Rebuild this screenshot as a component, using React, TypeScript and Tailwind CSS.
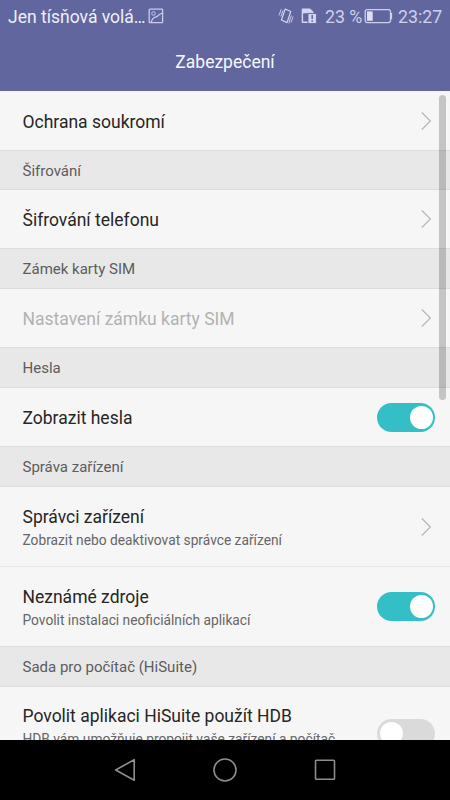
import type { ReactNode } from 'react';

function Chevron() {
  return (
    <svg width="12" height="20" viewBox="0 0 12 20" fill="none" stroke="#b4b4b4" strokeWidth="1.1" className="mr-[18px] shrink-0">
      <path d="M1.8 1.5 10.4 10 1.8 18.5" />
    </svg>
  );
}

function Toggle({ on }: { on: boolean }) {
  return (
    <div className={`mr-[15px] flex h-[29px] w-[58px] shrink-0 items-center rounded-full px-[2.5px] ${on ? 'justify-end bg-[#34bfc6]' : 'justify-start bg-[#dadada]'}`}>
      <div className="h-[23px] w-[23px] rounded-full bg-white" />
    </div>
  );
}

function Section({ children, height }: { children: ReactNode; height: string }) {
  return (
    <div className={`flex shrink-0 items-center border-y border-[#dddddd] bg-[#e8e8e8] pt-[2px] pl-[22.5px] text-[15px] text-[#5c5c5c] ${height}`}>
      {children}
    </div>
  );
}

function Row({ title, summary, end, height, disabled }: { title: string; summary?: string; end: ReactNode; height: string; disabled?: boolean }) {
  return (
    <div className={`flex shrink-0 items-center justify-between pl-[22.5px] ${height}`}>
      <div className="pt-[2px] whitespace-nowrap">
        <div className={`text-[17.5px] leading-[24px] ${disabled ? 'text-[#b2b2b2]' : 'text-[#262626]'}`}>{title}</div>
        {summary && <div className="text-[13.75px] leading-[22px] text-[#666666]">{summary}</div>}
      </div>
      {end}
    </div>
  );
}

function StatusBar() {
  return (
    <div className="flex h-[32px] items-center pl-[8px] text-[17.75px] text-[#eeeffa]">
      <span className="w-[137px] pt-[2px] text-[17.5px] whitespace-nowrap">Jen tísňová volá…</span>
      <svg width="16" height="16" viewBox="0 0 16 16" fill="none" stroke="#c9caec" strokeWidth="1.3" className="ml-[3px]">
        <rect x="1.2" y="1.2" width="13.4" height="13.4" rx="0.6" />
        <circle cx="5.5" cy="5.5" r="1.8" strokeWidth="1" />
        <path d="M3.2 14.2C4 11.5 5.6 9.5 7.5 9.2S10.8 6 14.3 5.2" />
      </svg>
      <svg width="16" height="18" viewBox="0 0 16 18" fill="none" stroke="#d4d5f0" strokeWidth="1.2" className="ml-[114px]">
        <path d="M7.2 2 12.8 4.5 9 15.6 3.4 13Z" strokeLinejoin="round" />
        <path d="M1 8.4 3.2 2.3M2.9 9.4 5 3.5M11.2 14 13.4 8.6M10.8 16.4 11.8 13.5M13 15.6 15.1 9.5" strokeWidth="0.9" />
      </svg>
      <svg width="16" height="18" viewBox="0 0 16 18" className="ml-[7px]">
        <path d="M1.4 2.2H8.8L11.9 5.3V15.2H1.4Z" fill="none" stroke="#d4d5f0" strokeWidth="1.4" strokeLinejoin="round" />
        <path d="M1.2 2H9L12 5V6.2H1.2Z" fill="#d4d5f0" />
        <rect x="7" y="6.4" width="8.4" height="10.2" fill="#d4d5f0" stroke="#62669f" strokeWidth="0.9" />
        <path d="M11.2 8V12M11.2 13.2V14.8" stroke="#62669f" strokeWidth="1.5" />
      </svg>
      <span className="ml-[8px] w-[38px] pt-[2px] whitespace-nowrap text-[#cfd0ea]">23 %</span>
      <svg width="29" height="16" viewBox="0 0 29 16" className="ml-[1px]">
        <rect x="1.2" y="1.6" width="25.3" height="13" rx="2" fill="none" stroke="#cfd0ea" strokeWidth="1.3" />
        <path d="M27.3 5V11.2" stroke="#cfd0ea" strokeWidth="1.6" />
        <rect x="3" y="3.4" width="5.7" height="9.4" fill="#dedff2" />
      </svg>
      <span className="ml-[5px] pt-[2px] whitespace-nowrap text-[#cfd0ea]">23:27</span>
    </div>
  );
}

export default function App() {
  return (
    <div className="flex h-[800px] w-[450px] flex-col overflow-hidden bg-[#f6f6f6] font-[Roboto,sans-serif]">
      <header className="h-[91px] shrink-0 bg-[#62669f]">
        <StatusBar />
        <h1 className="flex h-[59px] items-center justify-center pt-[2px] text-[17.5px] font-normal text-[#f7f7ff]">Zabezpečení</h1>
      </header>
      <main className="relative flex h-[649px] shrink-0 flex-col overflow-hidden">
        <Row height="h-[59px]" title="Ochrana soukromí" end={<Chevron />} />
        <Section height="h-[40px]">Šifrování</Section>
        <Row height="h-[58px]" title="Šifrování telefonu" end={<Chevron />} />
        <Section height="h-[41px]">Zámek karty SIM</Section>
        <Row height="h-[58px]" title="Nastavení zámku karty SIM" end={<Chevron />} disabled />
        <Section height="h-[41px]">Hesla</Section>
        <Row height="h-[58px]" title="Zobrazit hesla" end={<Toggle on />} />
        <Section height="h-[41px]">Správa zařízení</Section>
        <Row height="h-[79px]" title="Správci zařízení" summary="Zobrazit nebo deaktivovat správce zařízení" end={<Chevron />} />
        <Row height="h-[80px] border-t border-[#e9e9e9]" title="Neznámé zdroje" summary="Povolit instalaci neoficiálních aplikací" end={<Toggle on />} />
        <Section height="h-[41px]">Sada pro počítač (HiSuite)</Section>
        <Row
          height="h-[78px]"
          title="Povolit aplikaci HiSuite použít HDB"
          summary="HDB vám umožňuje propojit vaše zařízení a počítač"
          end={<div className="pt-[15px]"><Toggle on={false} /></div>}
        />
        <div className="absolute top-[4px] right-[4px] h-[305px] w-[7px] rounded-full bg-black/20" />
      </main>
      <nav className="grid h-[60px] shrink-0 grid-cols-[175px_100px_175px] bg-black">
        <div className="flex items-center justify-end pr-[38px]">
          <svg width="24" height="26" viewBox="0 0 24 26" fill="none" stroke="#8d8d8d" strokeWidth="1.6" strokeLinejoin="round">
            <path d="M21.2 2.7V23.3L2.7 13Z" />
          </svg>
        </div>
        <div className="flex items-center justify-center">
          <svg width="24" height="24" viewBox="0 0 24 24" fill="none" stroke="#8d8d8d" strokeWidth="1.6">
            <circle cx="12" cy="12" r="11" />
          </svg>
        </div>
        <div className="flex items-center pl-[39px]">
          <svg width="22" height="22" viewBox="0 0 22 22" fill="none" stroke="#8d8d8d" strokeWidth="1.6">
            <rect x="1.5" y="1.3" width="19" height="19" rx="0.8" />
          </svg>
        </div>
      </nav>
    </div>
  );
}
